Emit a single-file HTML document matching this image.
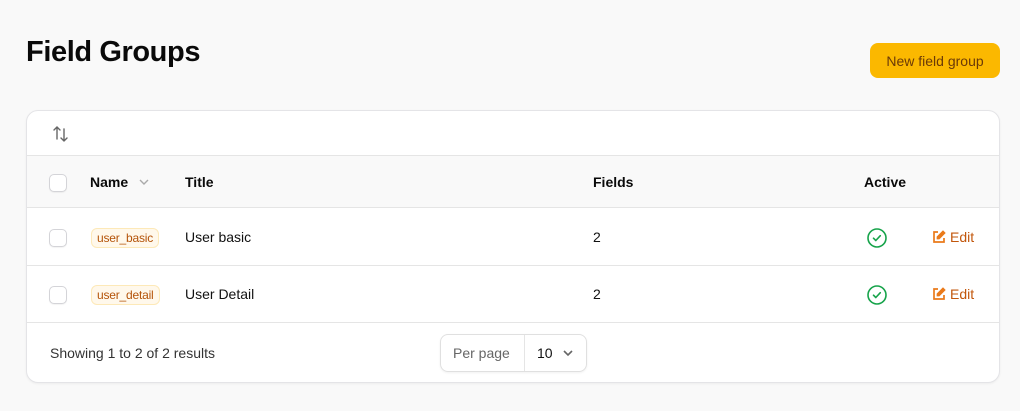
<!DOCTYPE html>
<html><head><style>
*{box-sizing:border-box;margin:0;padding:0}
body{width:1020px;height:411px;background:#f9f9f9;font-family:"Liberation Sans",sans-serif;color:#111;position:relative;overflow:hidden}
.abs{position:absolute}
h1{position:absolute;left:26px;top:36px;font-size:29px;font-weight:700;letter-spacing:-0.4px;color:#0a0a0a}
.btn{left:870px;top:43px;width:130px;height:35px;background:#fbb800;border-radius:8px;color:#6b3a08;font-size:14px;display:flex;align-items:center;justify-content:center}
.card{left:26px;top:110px;width:974px;height:273px;background:#fff;border:1px solid #e4e4e7;border-radius:12px;overflow:hidden;box-shadow:0 1px 2px rgba(0,0,0,.05)}
.hdr{left:0;top:44px;width:974px;height:53px;background:#f9f9f9;border-top:1px solid #e5e5e5;border-bottom:1px solid #e5e5e5}
.line{left:0;width:974px;height:1px;background:#e5e5e5}
.cb{width:18px;height:18px;border:1px solid #d4d4d8;border-radius:5px;background:#fff;box-shadow:0 1px 1px rgba(0,0,0,.05)}
.th{font-size:14px;font-weight:700;color:#0a0a0a}
.td{font-size:14px;color:#111}
.badge{height:20px;padding:0 5px;border:1px solid #fde9b8;background:#fff8eb;border-radius:6px;color:#b45309;font-size:12px;line-height:18px;letter-spacing:-0.2px}
.edit{font-size:14px;color:#c2570c;display:flex;align-items:center;gap:4px}
.pp{left:413px;top:223px;width:147px;height:38px;border:1px solid #e0e0e0;border-radius:8px;box-shadow:0 1px 2px rgba(0,0,0,.06)}
</style></head><body>
<h1>Field Groups</h1>
<div class="abs btn">New field group</div>
<div class="abs card">
<svg class="abs" style="left:24px;top:14px" width="20" height="18" viewBox="0 0 20 18" fill="none" stroke="#666" stroke-width="1.4" stroke-linecap="round" stroke-linejoin="round"><path d="M6 14V2M3 5l3-3 3 3M13 4v12M10 13l3 3 3-3"/></svg>
<div class="abs hdr"></div>
<div class="abs cb" style="left:22px;top:63px"></div>
<div class="abs th" style="left:63px;top:63px">Name</div>
<svg class="abs" style="left:111px;top:67px" width="12" height="8" viewBox="0 0 12 8" fill="none" stroke="#aaa" stroke-width="1.4"><path d="M2 2l4 4 4-4"/></svg>
<div class="abs th" style="left:158px;top:63px">Title</div>
<div class="abs th" style="left:566px;top:63px">Fields</div>
<div class="abs th" style="left:837px;top:63px">Active</div>

<div class="abs cb" style="left:22px;top:118px"></div>
<div class="abs badge" style="left:64px;top:117px">user_basic</div>
<div class="abs td" style="left:158px;top:118px">User basic</div>
<div class="abs td" style="left:566px;top:118px">2</div>
<svg class="abs" style="left:839px;top:116px" width="22" height="22" viewBox="0 0 22 22" fill="none" stroke="#16a34a" stroke-width="1.6"><circle cx="11" cy="11" r="9"/><path d="M7.5 11.2l2.3 2.3 4.5-4.8" stroke-linecap="round" stroke-linejoin="round"/></svg>
<div class="abs edit" style="left:905px;top:118px"><svg width="14" height="14" viewBox="0 0 14 14" fill="none" stroke="#ea7a1a" stroke-width="1.7"><path d="M6 2H2v10h10V8"/><path d="M11 1.5l1.5 1.5L7 8.5H5.5V7z" fill="#ea7a1a"/></svg>Edit</div>

<div class="abs line" style="top:154px"></div>
<div class="abs cb" style="left:22px;top:175px"></div>
<div class="abs badge" style="left:64px;top:174px">user_detail</div>
<div class="abs td" style="left:158px;top:175px">User Detail</div>
<div class="abs td" style="left:566px;top:175px">2</div>
<svg class="abs" style="left:839px;top:173px" width="22" height="22" viewBox="0 0 22 22" fill="none" stroke="#16a34a" stroke-width="1.6"><circle cx="11" cy="11" r="9"/><path d="M7.5 11.2l2.3 2.3 4.5-4.8" stroke-linecap="round" stroke-linejoin="round"/></svg>
<div class="abs edit" style="left:905px;top:175px"><svg width="14" height="14" viewBox="0 0 14 14" fill="none" stroke="#ea7a1a" stroke-width="1.7"><path d="M6 2H2v10h10V8"/><path d="M11 1.5l1.5 1.5L7 8.5H5.5V7z" fill="#ea7a1a"/></svg>Edit</div>

<div class="abs line" style="top:211px"></div>
<div class="abs td" style="left:23px;top:234px;color:#333">Showing 1 to 2 of 2 results</div>
<div class="abs pp">
<div class="abs" style="left:12px;top:10px;font-size:14px;color:#666">Per page</div>
<div class="abs" style="left:83px;top:0;width:1px;height:36px;background:#e5e5e5"></div>
<div class="abs" style="left:96px;top:10px;font-size:14px;color:#111">10</div>
<svg class="abs" style="left:121px;top:14px" width="12" height="8" viewBox="0 0 12 8" fill="none" stroke="#666" stroke-width="1.6"><path d="M2 2l4 4 4-4"/></svg>
</div>
</div>
</body></html>
